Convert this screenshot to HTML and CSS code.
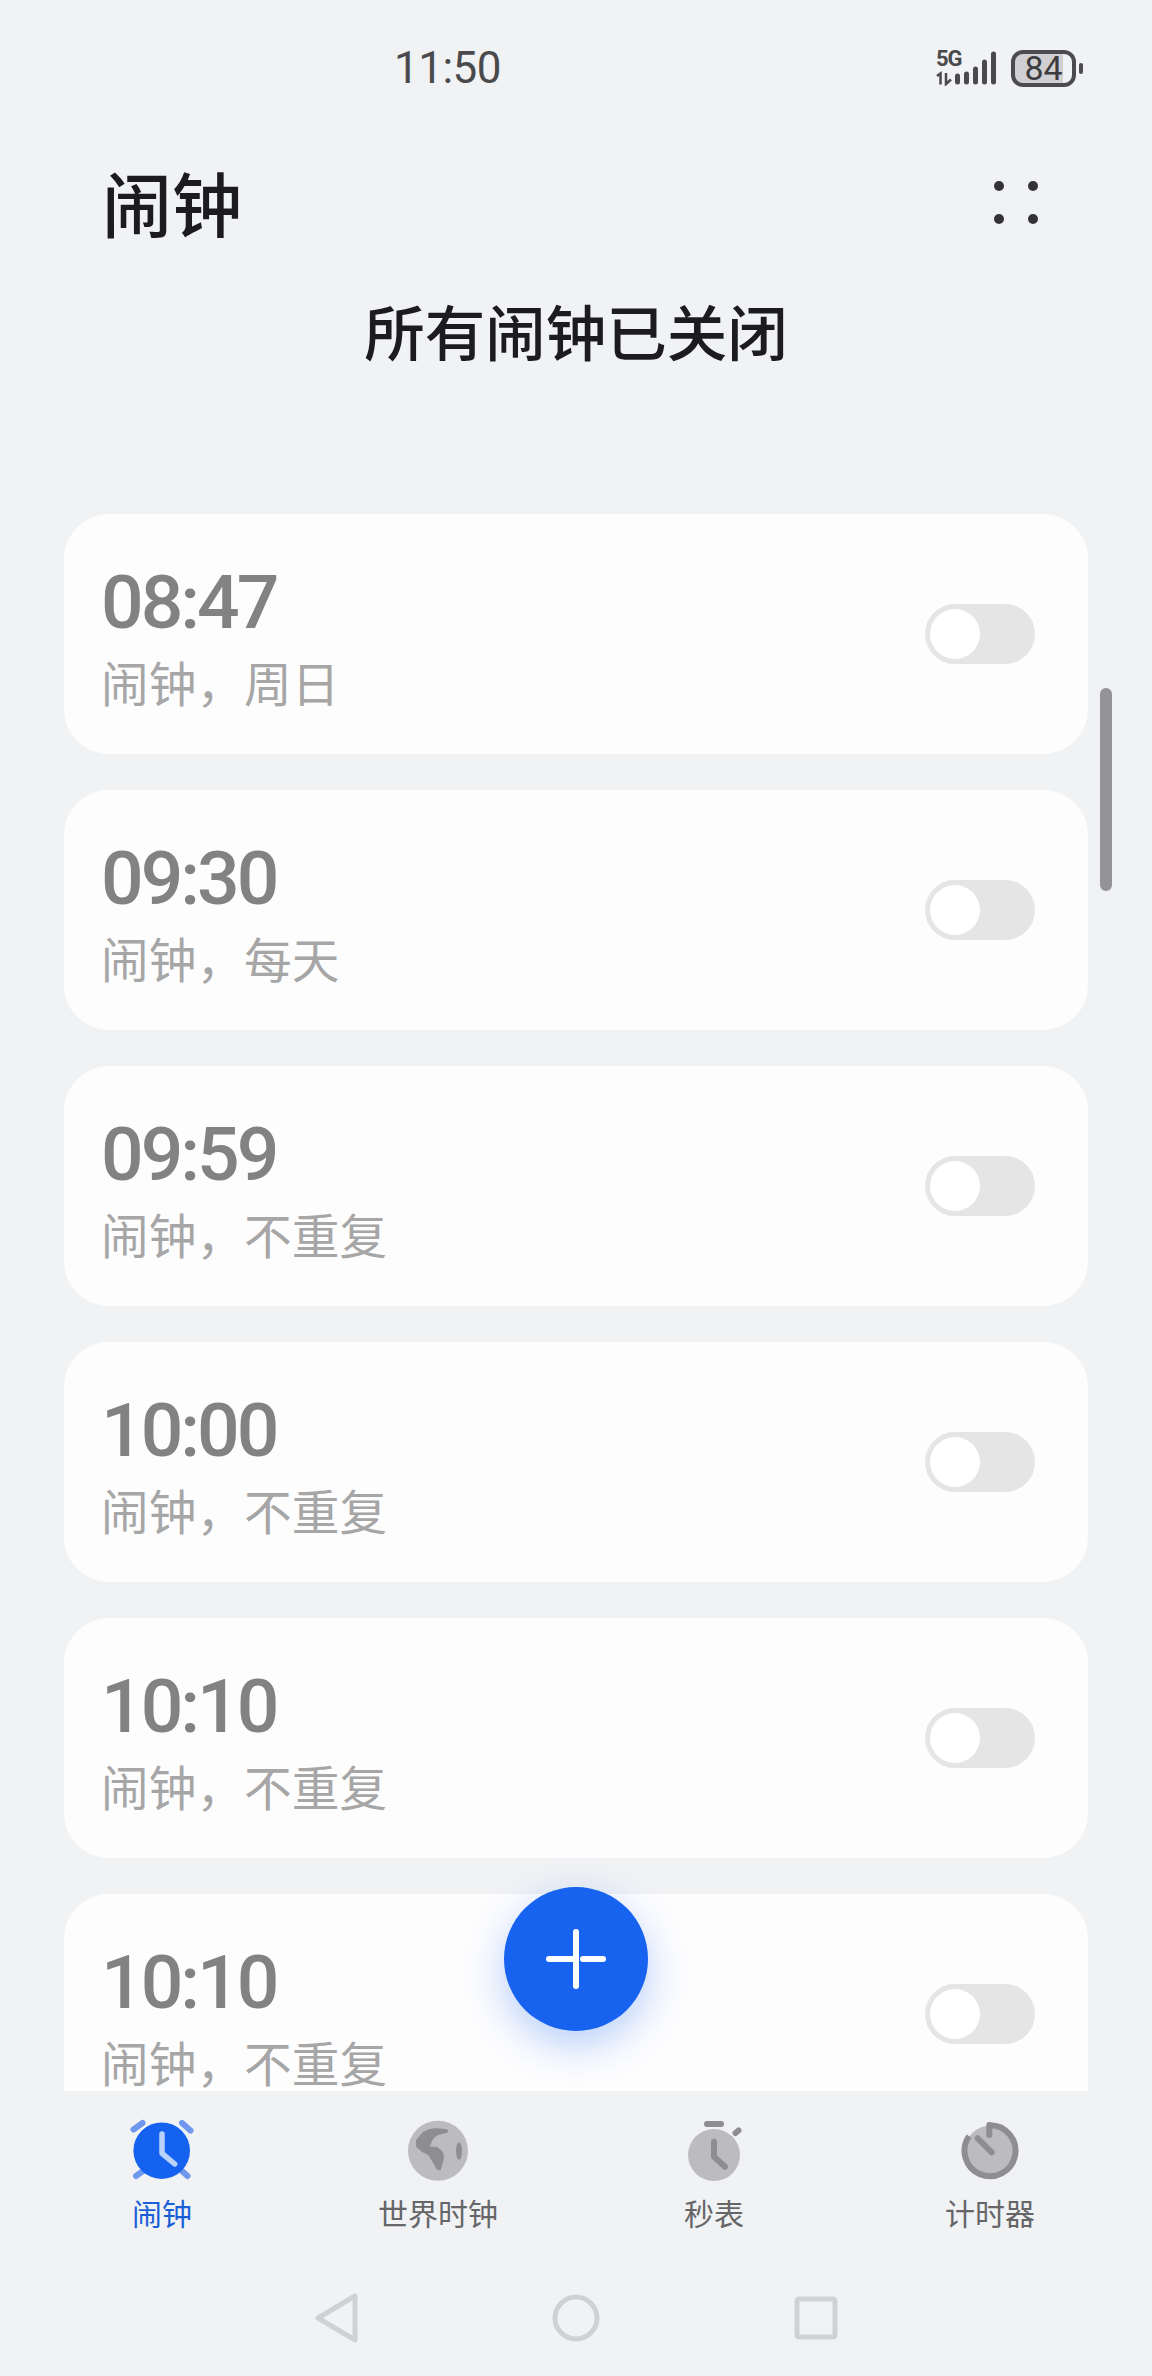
FILE: index.html
```html
<!DOCTYPE html>
<html lang="zh-CN">
<head>
    <meta charset="UTF-8">
    <meta name="viewport" content="width=device-width, initial-scale=1.0">
    <title>闹钟</title>
    <link rel="stylesheet" href="styles.css">
</head>
<body>
    <div class="phone">
        <div class="status-bar">
            <span class="clock">11:50</span>
            <div class="status-icons">
                <div class="signal">
                    <span class="net">5G</span>
                    <svg width="61" height="36" viewBox="0 0 61 36">
                        <g stroke="#4a4a4c" stroke-width="2.5" fill="none">
                            <path d="M1 26l3.500-2.500v11"/>
                            <path d="M10 23v11l5-4.500"/>
                        </g>
                        <g stroke="#4a4a4c" stroke-width="5" stroke-linecap="round">
                            <path d="M21.500 26v6"/>
                            <path d="M30.500 24v8"/>
                            <path d="M39.500 19v13"/>
                            <path d="M48.500 12v20"/>
                            <path d="M57.500 4v28"/>
                        </g>
                    </svg>
                </div>
                <div class="battery"><span>84</span></div>
            </div>
        </div>

        <div class="title-row">
            <h1>闹钟</h1>
            <div class="more">
                <i></i><i></i><i></i><i></i>
            </div>
        </div>
        <h2 class="summary">所有闹钟已关闭</h2>

        <div class="alarm-list">
            <div class="card">
                <div class="card-text">
                    <div class="time">08:47</div>
                    <div class="desc">闹钟，周日</div>
                </div>
                <div class="toggle"></div>
            </div>
            <div class="card">
                <div class="card-text">
                    <div class="time">09:30</div>
                    <div class="desc">闹钟，每天</div>
                </div>
                <div class="toggle"></div>
            </div>
            <div class="card">
                <div class="card-text">
                    <div class="time">09:59</div>
                    <div class="desc">闹钟，不重复</div>
                </div>
                <div class="toggle"></div>
            </div>
            <div class="card">
                <div class="card-text">
                    <div class="time">10:00</div>
                    <div class="desc">闹钟，不重复</div>
                </div>
                <div class="toggle"></div>
            </div>
            <div class="card">
                <div class="card-text">
                    <div class="time">10:10</div>
                    <div class="desc">闹钟，不重复</div>
                </div>
                <div class="toggle"></div>
            </div>
            <div class="card">
                <div class="card-text">
                    <div class="time">10:10</div>
                    <div class="desc">闹钟，不重复</div>
                </div>
                <div class="toggle"></div>
            </div>
        </div>

        <div class="tab-bar">
            <div class="tab active">
                <svg width="64" height="64" viewBox="0 0 64 64" fill="none" stroke-linecap="round">
                    <g stroke="#7097ee" stroke-width="6">
                        <path d="M3.500 11.500L12.500 5"/>
                        <path d="M52 5L60.500 12.500"/>
                        <path d="M6 58L13 53"/>
                        <path d="M52 53L57.500 58"/>
                    </g>
                    <circle cx="31.700" cy="32.700" r="28.300" fill="#1562f0"/>
                    <path d="M32 16V35.300L44.700 46" stroke="#b9d3fb" stroke-width="5.500" stroke-linejoin="round"/>
                </svg>
                <span>闹钟</span>
            </div>
            <div class="tab">
                <svg width="64" height="64" viewBox="0 0 64 64">
                    <circle cx="32" cy="32.700" r="30" fill="#bcbcbe"/>
                    <path fill="#8e8e90" d="M10 22L17.300 13.700Q24 10 30.700 10.300L40.700 11.300Q43 12.500 42.300 14.300L32.300 17Q27 20 25.700 23.700L24 28.700L30.700 28.700Q35 31 37.300 35.300L38 40.300L34.700 52Q32.500 52.500 30.700 51.300L27.300 45.300L22.300 37L15.700 33.700L10 28.700Z"/>
                    <ellipse cx="53" cy="33" rx="3" ry="8.700" fill="#8e8e90"/>
                </svg>
                <span>世界时钟</span>
            </div>
            <div class="tab">
                <svg width="64" height="64" viewBox="0 0 64 64" fill="none" stroke-linecap="round">
                    <circle cx="32" cy="37" r="26" fill="#bcbcbe"/>
                    <g stroke="#8e8e90" stroke-width="6" stroke-linejoin="round">
                        <path d="M25 6H39"/>
                        <path d="M53.500 15L56.500 12.500"/>
                        <path d="M32 23.700V38.700L43 48.700"/>
                    </g>
                </svg>
                <span>秒表</span>
            </div>
            <div class="tab">
                <svg width="64" height="64" viewBox="0 0 64 64" fill="none" stroke-linecap="round">
                    <circle cx="32" cy="32.700" r="25" fill="#bcbcbe"/>
                    <g stroke="#8e8e90" stroke-width="6">
                        <path stroke-linecap="butt" d="M32 7.200A25.500 25.500 0 1 1 11.100 18.100"/>
                        <path d="M31.300 7V17"/>
                        <path d="M19.700 20.300L33.700 34.300"/>
                    </g>
                </svg>
                <span>计时器</span>
            </div>
        </div>

        <div class="nav-bar">
            <svg width="44" height="52" viewBox="0 0 44 52" fill="none" stroke="#d0d1d3" stroke-width="5" stroke-linejoin="round">
                <path d="M41 4V48L4 26Z"/>
            </svg>
            <svg width="48" height="48" viewBox="0 0 48 48" fill="none" stroke="#d0d1d3" stroke-width="5">
                <circle cx="24" cy="24" r="21"/>
            </svg>
            <svg width="44" height="44" viewBox="0 0 44 44" fill="none" stroke="#d0d1d3" stroke-width="5" stroke-linejoin="round">
                <rect x="3" y="3" width="38" height="38" rx="2"/>
            </svg>
        </div>

        <div class="scrollbar"></div>
        <div class="fab">
            <svg width="60" height="60" viewBox="0 0 60 60" stroke="#fff" stroke-width="6" stroke-linecap="round" fill="none">
                <path d="M30 3V57"/>
                <path d="M3 30H30"/>
                <path d="M37 30H57"/>
            </svg>
        </div>
    </div>
</body>
</html>
```

FILE: styles.css
```css
*{
    margin: 0;
    padding: 0;
    box-sizing: border-box;
}
body{
    width: 1152px;
    height: 2376px;
    overflow: hidden;
    background-color: #f0f2f4;
    font-family: "Noto Sans CJK SC", Roboto, sans-serif;
}
.phone{
    position: relative;
    display: flex;
    flex-direction: column;
    width: 1152px;
    height: 2376px;
}

/* status bar */
.status-bar{
    display: flex;
    align-items: center;
    justify-content: space-between;
    flex: none;
    height: 136px;
    padding: 0 76px 0 394px;
}
.clock{
    font-family: Roboto, sans-serif;
    font-size: 44px;
    letter-spacing: -0.5px;
    color: #4a4a4c;
}
.status-icons{
    display: flex;
    align-items: center;
    gap: 14px;
}
.signal{
    position: relative;
    width: 61px;
    height: 36px;
}
.signal svg{
    display: block;
}
.net{
    position: absolute;
    left: 0;
    top: 0;
    font-family: Roboto, sans-serif;
    font-size: 22px;
    font-weight: 700;
    line-height: 18px;
    letter-spacing: -1px;
    color: #4a4a4c;
}
.battery{
    position: relative;
    display: flex;
    align-items: center;
    justify-content: center;
    width: 65px;
    height: 37px;
    border: 4px solid #4c4c4e;
    border-radius: 12px;
    background: linear-gradient(90deg, #d0d0d2 85%, transparent 85%);
    font-family: Roboto, sans-serif;
    font-size: 34px;
    color: #3c3c3e;
}
.battery::after{
    content: "";
    position: absolute;
    right: -11px;
    top: 9px;
    width: 4px;
    height: 11px;
    border-radius: 2px;
    background-color: #4c4c4e;
}

/* title */
.title-row{
    display: flex;
    align-items: center;
    justify-content: space-between;
    flex: none;
    height: 132px;
    padding: 0 114px 0 102px;
}
h1{
    font-size: 70px;
    font-weight: 500;
    line-height: 90px;
    color: #1c1c1e;
}
.more{
    display: grid;
    grid-template-columns: 10px 10px;
    gap: 23px 24px;
}
.more i{
    display: block;
    width: 10px;
    height: 10px;
    border-radius: 50%;
    background-color: #333335;
}
.summary{
    flex: none;
    height: 246px;
    padding-top: 17px;
    text-align: center;
    font-size: 60.5px;
    font-weight: 500;
    line-height: 90px;
    color: #1c1c1e;
}

/* alarm cards */
.alarm-list{
    display: flex;
    flex-direction: column;
    gap: 36px;
    flex: none;
    height: 1577px;
    margin: 0 64px;
    overflow: hidden;
}
.card{
    display: flex;
    align-items: center;
    justify-content: space-between;
    flex: none;
    height: 240px;
    padding: 0 53px 0 37px;
    border-radius: 45px;
    background-color: #fdfdfe;
}
.card-text{
    padding-top: 5px;
}
.time{
    font-family: Roboto, sans-serif;
    font-size: 75px;
    font-weight: 500;
    line-height: 80px;
    letter-spacing: -3px;
    color: #828282;
}
.desc{
    margin-top: 10px;
    font-size: 47.7px;
    line-height: 60px;
    color: #a6a6a6;
}
.toggle{
    position: relative;
    width: 110px;
    height: 60px;
    border-radius: 30px;
    background-color: #e5e5e5;
}
.toggle::after{
    content: "";
    position: absolute;
    left: 5px;
    top: 5px;
    width: 50px;
    height: 50px;
    border-radius: 50%;
    background-color: #fff;
}

/* bottom tabs */
.tab-bar{
    display: grid;
    grid-template-columns: repeat(4, 276px);
    flex: none;
    height: 180px;
    padding: 27px 24px 0;
}
.tab{
    display: flex;
    flex-direction: column;
    align-items: center;
    font-size: 30px;
    line-height: 40px;
    color: #666668;
}
.tab span{
    margin-top: 10px;
}
.tab.active{
    color: #1a5fd8;
}

.nav-bar{
    display: flex;
    align-items: center;
    justify-content: center;
    gap: 194px;
    flex: none;
    height: 93px;
}

/* floating bits */
.scrollbar{
    position: absolute;
    left: 1100px;
    top: 688px;
    width: 12px;
    height: 203px;
    border-radius: 6px;
    background-color: #949496;
}
.fab{
    position: absolute;
    left: 504px;
    top: 1887px;
    display: flex;
    align-items: center;
    justify-content: center;
    width: 144px;
    height: 144px;
    border-radius: 50%;
    background-color: #1763f0;
    box-shadow: 0 14px 40px rgba(23, 99, 240, 0.3);
}
```
